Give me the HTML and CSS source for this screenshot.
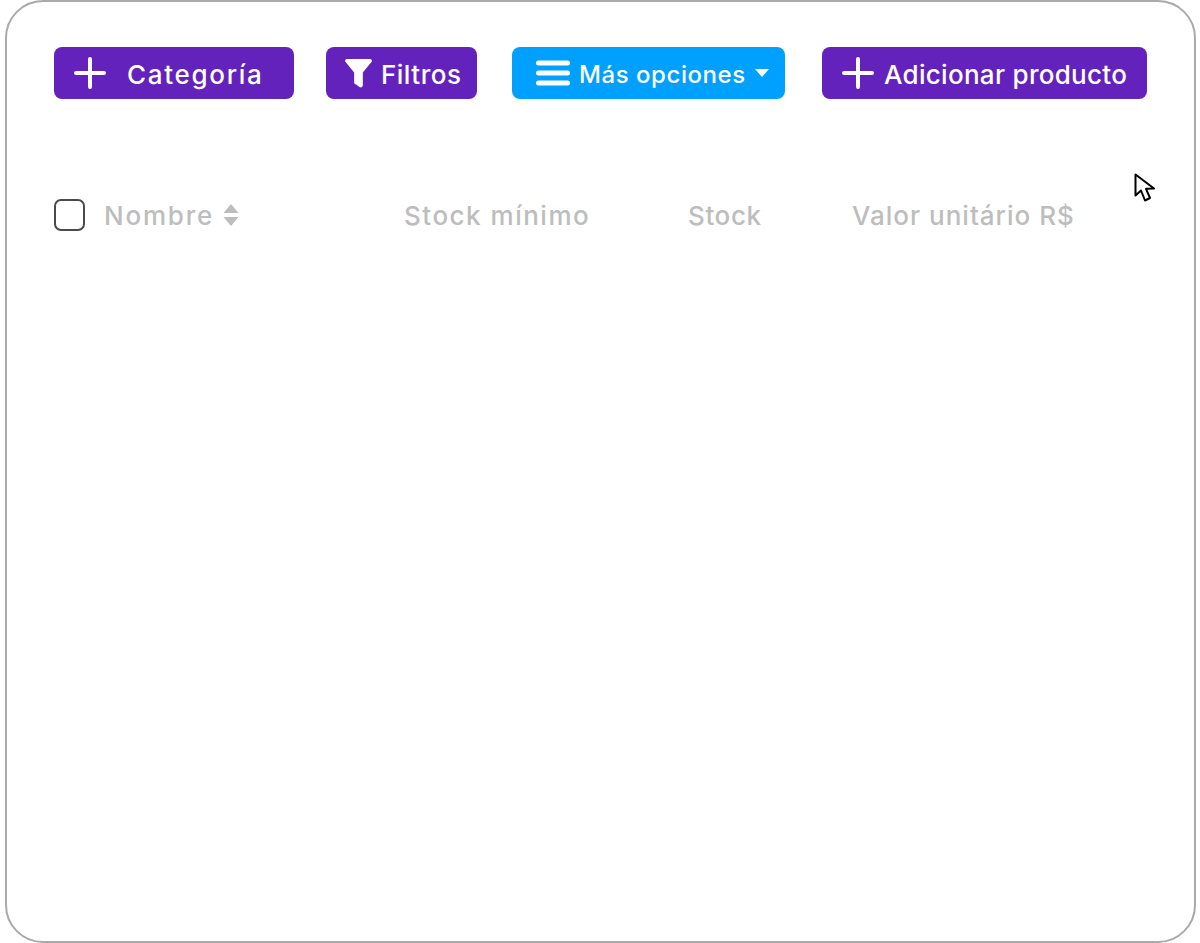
FILE: index.html
```html
<!DOCTYPE html>
<html lang="es">
<head>
<meta charset="utf-8">
<title>Productos</title>
<link rel="stylesheet" href="styles.css">
</head>
<body>
<main class="card">
  <div class="toolbar">
    <button class="btn btn-purple btn-category">
      <svg class="icon-plus" viewBox="0 0 32 32"><path d="M16 2V30M2 16H30"/></svg>
      <span>Categoría</span>
    </button>
    <button class="btn btn-purple btn-filter">
      <svg class="icon-filter" viewBox="0 0 28 30"><path d="M2 0H26C27.7 0 28.500 2 27.400 3.200L18.500 14V27C18.500 29 16.500 30 15 29L11.500 26.500C10.400 26 9.500 25.400 9.500 24.500V14L.6 3.200C-.5 2 .3 0 2 0Z"/></svg>
      <span>Filtros</span>
    </button>
    <button class="btn btn-blue btn-more">
      <svg class="icon-menu" viewBox="0 0 34 26"><path d="M2.500 3H31.500M2.500 13H31.500M2.500 23H31.500"/></svg>
      <span>Más opciones</span>
      <svg class="icon-caret" viewBox="0 0 14 8"><path d="M0 0H14L7 8Z"/></svg>
    </button>
    <button class="btn btn-purple btn-add">
      <svg class="icon-plus" viewBox="0 0 32 32"><path d="M16 2V30M2 16H30"/></svg>
      <span>Adicionar producto</span>
    </button>
  </div>
  <div class="table-head">
    <div class="col col-name">
      <span class="checkbox"></span>
      <span class="label-name">Nombre</span>
      <svg class="icon-sort" viewBox="0 0 16 22"><path d="M8 0L15.500 9H.5ZM.5 13H15.500L8 22Z"/></svg>
    </div>
    <div class="col col-min">Stock mínimo</div>
    <div class="col col-stock">Stock</div>
    <div class="col col-value">Valor unitário R$</div>
  </div>
  <svg class="cursor" viewBox="0 0 22 30"><path d="M1.500 1.500V22.500L7 17.500L11 27.500L16 25L12 15.800L20 15.500Z"/></svg>
</main>
</body>
</html>
```
FILE: styles.css
```css
* {
  box-sizing: border-box;
}

html,
body {
  margin: 0;
  height: 100%;
  background: #fff;
}

body {
  padding: 0 4px 0 5px;
  font-family: Inter, "Noto Sans", sans-serif;
}

.card {
  position: relative;
  height: 943px;
  padding: 45px 47px 0 47px;
  border: 2px solid #aaaaaa;
  border-radius: 38px;
  background: #fff;
}

.toolbar {
  display: flex;
  align-items: stretch;
  height: 52px;
}

.btn {
  display: flex;
  align-items: center;
  height: 52px;
  padding: 0;
  border: 0;
  border-radius: 8px;
  color: #fff;
  font-family: inherit;
  font-size: 26px;
  font-weight: 500;
  white-space: nowrap;
}

.btn span {
  position: relative;
  top: 1px;
}

.btn-purple {
  background: #6422bd;
}

.btn-blue {
  background: #00a0ff;
}

.btn-category {
  width: 240px;
  padding-left: 20px;
  gap: 21px;
  letter-spacing: 1.7px;
}

.btn-filter {
  width: 151px;
  margin-left: 32px;
  padding-left: 19px;
  gap: 9px;
  letter-spacing: 0.5px;
}

.btn-more {
  width: 273px;
  margin-left: 35px;
  padding-left: 24px;
  gap: 9px;
  font-size: 24px;
  letter-spacing: 0.55px;
}

.btn-add {
  width: 325px;
  margin-left: 37px;
  padding-left: 20px;
  gap: 10px;
  letter-spacing: 0.3px;
}

.icon-plus {
  flex: none;
  width: 32px;
  height: 32px;
  fill: none;
  stroke: #fff;
  stroke-width: 4;
  stroke-linecap: round;
}

.icon-filter {
  flex: none;
  width: 27px;
  height: 29px;
  fill: #fff;
}

.icon-menu {
  flex: none;
  width: 34px;
  height: 26px;
  fill: none;
  stroke: #fff;
  stroke-width: 5;
  stroke-linecap: round;
}

.icon-caret {
  flex: none;
  width: 14px;
  height: 8px;
  fill: #fff;
}

.table-head {
  display: grid;
  grid-template-columns: 350px 284px 164px 1fr;
  align-items: center;
  height: 32px;
  margin-top: 100px;
  color: #bdbdbd;
  font-size: 26px;
  font-weight: 500;
  white-space: nowrap;
}

.col-name {
  display: flex;
  align-items: center;
}

.label-name {
  letter-spacing: 1.8px;
}

.col-min {
  letter-spacing: 1.5px;
}

.col-stock {
  letter-spacing: 0.6px;
}

.col-value {
  letter-spacing: 1px;
}

.checkbox {
  flex: none;
  width: 31px;
  height: 32px;
  margin-right: 19px;
  border: 2px solid #4a4a4a;
  border-radius: 7px;
}

.icon-sort {
  flex: none;
  width: 16px;
  height: 22px;
  margin-left: 9px;
  fill: #bdbdbd;
}

.cursor {
  position: absolute;
  top: 171px;
  left: 1127px;
  width: 22px;
  height: 30px;
  fill: #fff;
  stroke: #000;
  stroke-width: 2;
  stroke-linejoin: round;
}
```
